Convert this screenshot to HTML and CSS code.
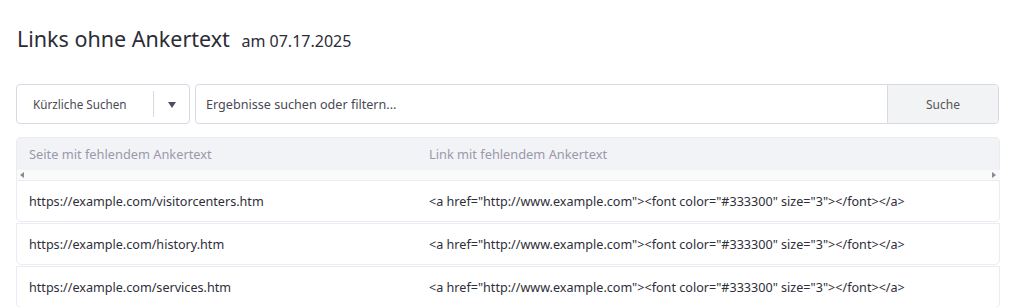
FILE: index.html
```html
<!DOCTYPE html>
<html lang="de">
<head>
<meta charset="utf-8">
<link rel="stylesheet" href="styles.css">
</head>
<body>
<div class="page">
  <h1 class="title">Links ohne Ankertext <span class="date">am 07.17.2025</span></h1>
  <div class="searchbar">
    <div class="recent">
      <span class="recent-label">Kürzliche Suchen</span>
      <span class="divider"></span>
      <span class="caret"></span>
    </div>
    <div class="search">
      <span class="placeholder">Ergebnisse suchen oder filtern...</span>
      <button class="search-btn">Suche</button>
    </div>
  </div>
  <div class="table">
    <div class="thead">
      <div class="cell c1">Seite mit fehlendem Ankertext</div>
      <div class="cell c2">Link mit fehlendem Ankertext</div>
    </div>
    <div class="scroll">
      <span class="arrow left"></span>
      <span class="arrow right"></span>
    </div>
    <div class="row">
      <div class="cell c1">https://example.com/visitorcenters.htm</div>
      <div class="cell c2">&lt;a href="http://www.example.com"&gt;&lt;font color="#333300" size="3"&gt;&lt;/font&gt;&lt;/a&gt;</div>
    </div>
    <div class="row">
      <div class="cell c1">https://example.com/history.htm</div>
      <div class="cell c2">&lt;a href="http://www.example.com"&gt;&lt;font color="#333300" size="3"&gt;&lt;/font&gt;&lt;/a&gt;</div>
    </div>
    <div class="row">
      <div class="cell c1">https://example.com/services.htm</div>
      <div class="cell c2">&lt;a href="http://www.example.com"&gt;&lt;font color="#333300" size="3"&gt;&lt;/font&gt;&lt;/a&gt;</div>
    </div>
  </div>
</div>
</body>
</html>
```
FILE: styles.css
```css
* { box-sizing: border-box; }
html, body { margin: 0; padding: 0; background: #fff; }
body {
  font-family: "Noto Sans", "Open Sans", sans-serif;
  color: #333;
  overflow: hidden;
}
.page { padding: 25px 12px 0 16px; }
.title {
  margin: 0 0 0 1px;
  font-size: 21.5px;
  font-weight: 400;
  color: #2c2c36;
  line-height: 28px;
  height: 28px;
}
.date { font-size: 16px; margin-left: 6px; color: #2c2c36; }
.searchbar {
  display: flex;
  gap: 5px;
  margin-top: 31px;
  height: 40px;
}
.recent {
  width: 174px;
  border: 1px solid #d9d7e3;
  border-radius: 4px;
  display: flex;
  align-items: center;
  padding-left: 16px;
}
.recent-label { font-size: 11.7px; color: #4a4a55; width: 120px; }
.divider { width: 1px; height: 26px; background: #d9d7e3; }
.caret {
  margin-left: 14px;
  width: 0; height: 0;
  border-left: 4.5px solid transparent;
  border-right: 4.5px solid transparent;
  border-top: 6px solid #4b4f63;
  margin-top: 2px;
}
.search {
  flex: 1;
  display: flex;
  align-items: center;
  border: 1px solid #d9d7e3;
  border-radius: 4px;
  overflow: hidden;
}
.placeholder { flex: 1; padding-left: 10px; font-size: 12.6px; color: #4a4a55; }
.search-btn {
  width: 111px;
  height: 100%;
  border: 0;
  border-left: 1px solid #d9d7e3;
  background: #f2f3f5;
  font-family: inherit;
  font-size: 12px;
  color: #555;
  padding: 0;
}
.table { margin-top: 13px; width: 984px; }
.thead {
  display: flex;
  height: 33px;
  align-items: center;
  background: #f2f3f6;
  border: 1px solid #ebecf1;
  border-bottom: 0;
  border-radius: 5px 5px 0 0;
}
.thead .cell { font-size: 12.8px; color: #9a98ab; }
.cell.c1 { width: 412px; padding-left: 12px; }
.cell.c2 { flex: 1; }
.scroll {
  height: 10px;
  background: #fafafa;
  display: flex;
  justify-content: space-between;
  align-items: center;
  padding: 0 4px 0 3px;
  border-left: 1px solid #ebecf1;
}
.arrow { width: 0; height: 0; border-top: 3px solid transparent; border-bottom: 3px solid transparent; }
.arrow.left { border-right: 4px solid #8a8a8a; }
.arrow.right { border-left: 4px solid #8a8a8a; }
.row {
  display: flex;
  align-items: center;
  height: 42px;
  border: 1px solid #ebebf3;
  border-radius: 0 0 5px 5px;
  margin-bottom: 1px;
}
.row .cell { font-size: 12.6px; color: #2e2e38; }
```
